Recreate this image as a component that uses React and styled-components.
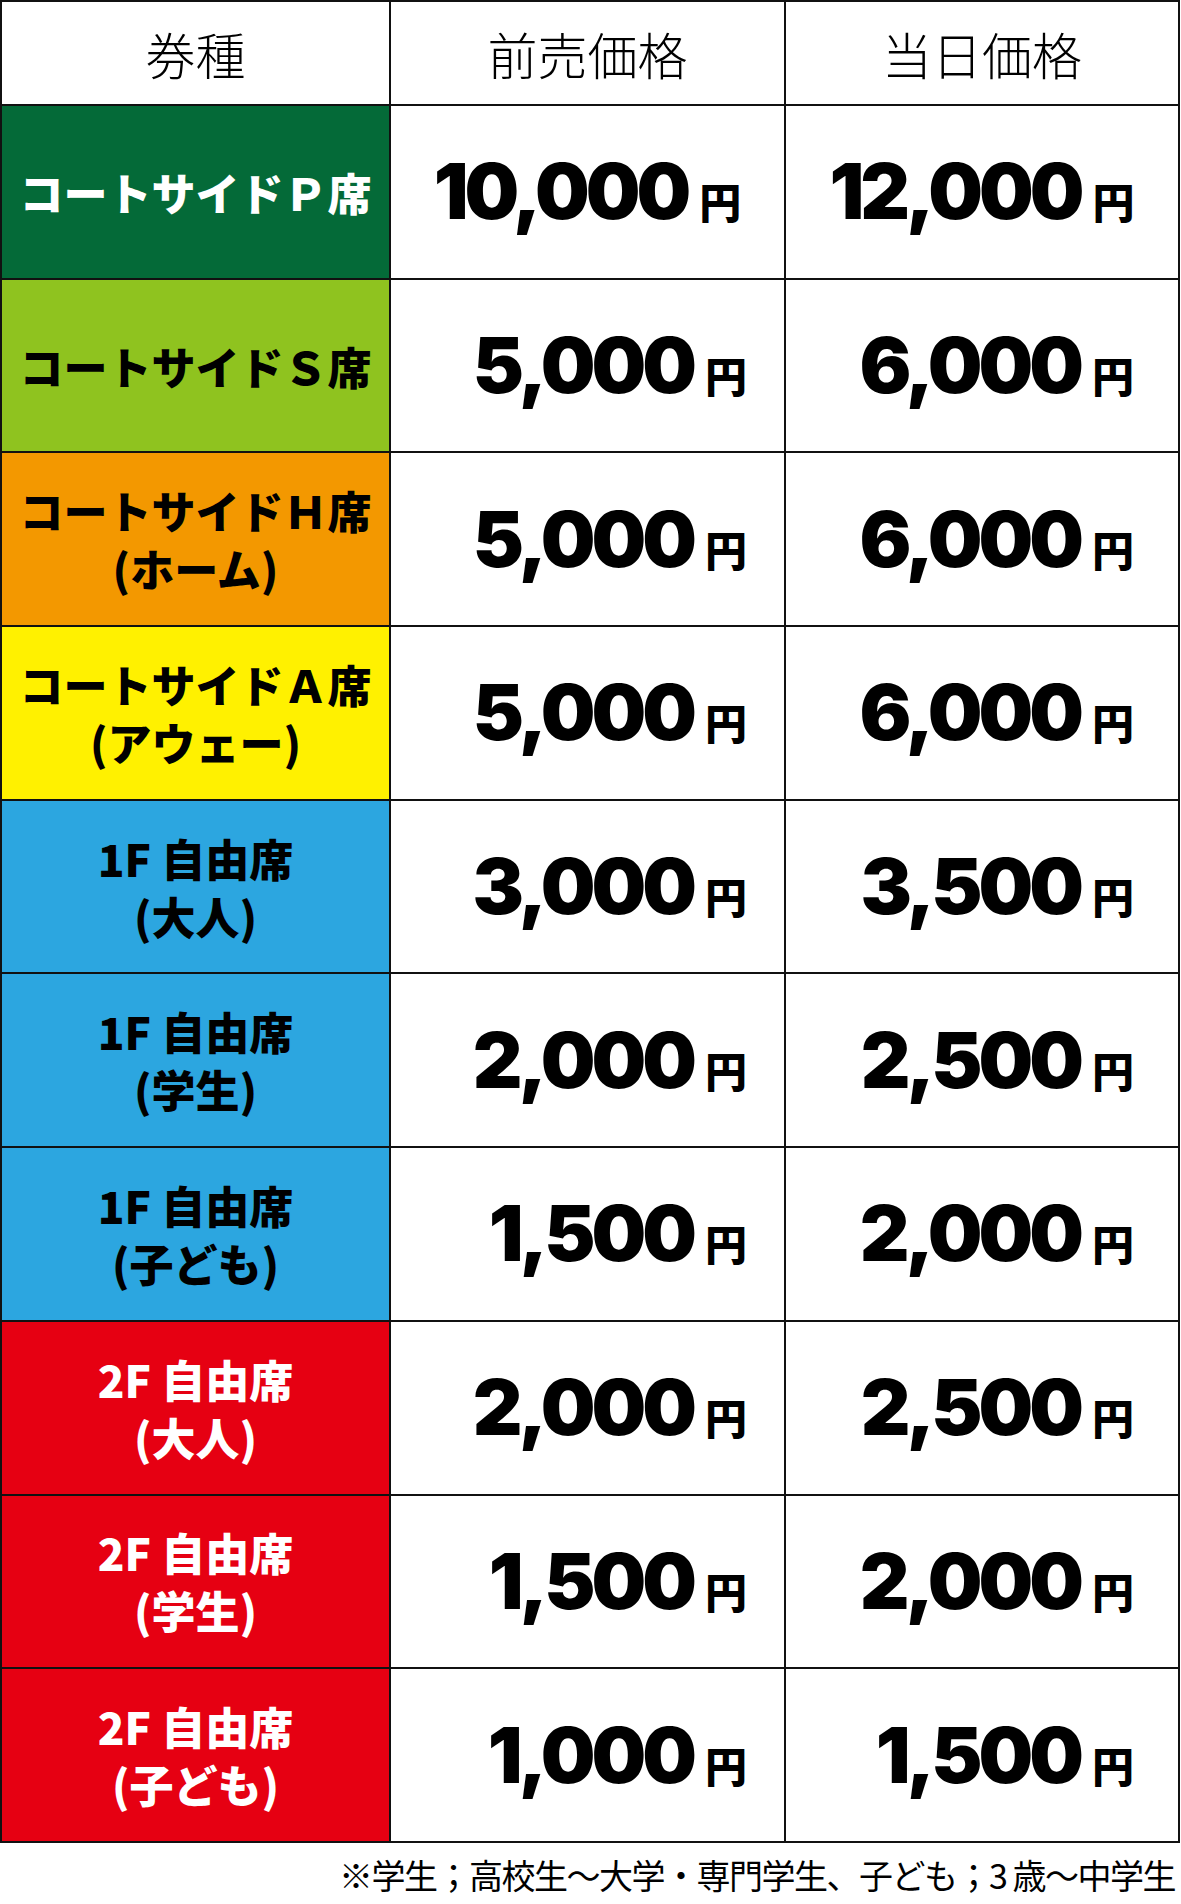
import React from 'react'
import styled, { createGlobalStyle } from 'styled-components'

const GlobalStyle = createGlobalStyle`
  body {
    margin: 0;
    background: #fff;
    font-family: "Noto Sans CJK JP", "Noto Sans", sans-serif;
    color: #000;
  }
`

const Sheet = styled.div`
  width: 1181px;
`

const Table = styled.table`
  width: 1180px;
  border-collapse: collapse;
  table-layout: fixed;
  border: 2px solid #111;
`

const HeadRow = styled.tr`
  height: 104px;
`

const Row = styled.tr`
  height: 173.7px;
`

const HeadCell = styled.th`
  border: 2px solid #111;
  padding: 0;
  font-family: "Noto Sans CJK JP", sans-serif;
  font-weight: 300;
  font-size: 50px;
  line-height: 1;
  text-align: center;
  vertical-align: middle;
`

const LabelCell = styled.td`
  border: 2px solid #111;
  padding: 0;
  background: ${p => p.$bg};
  color: ${p => p.$fg};
  font-family: "Noto Sans CJK JP", sans-serif;
  font-weight: 900;
  font-size: 44px;
  line-height: 58px;
  text-align: center;
  vertical-align: middle;
  white-space: nowrap;
`

const Line = styled.div`
  display: block;
`

const PriceCell = styled.td`
  border: 2px solid #111;
  padding: 0 ${p => (p.$center ? 0 : p.$pr)}px 0 0;
  text-align: ${p => (p.$center ? 'center' : 'right')};
  vertical-align: middle;
  white-space: nowrap;
`

const Amount = styled.span`
  font-family: Inter, "Liberation Sans", sans-serif;
  font-weight: 900;
  font-size: 77px;
  letter-spacing: -4px;
  line-height: 1;
`

const Yen = styled.span`
  font-family: "Noto Sans CJK JP", sans-serif;
  font-weight: 900;
  font-size: 42px;
  margin-left: 12px;
  line-height: 1;
`

const Note = styled.div`
  margin-top: 12px;
  padding-right: 6px;
  text-align: right;
  font-family: "Noto Sans CJK JP", sans-serif;
  font-weight: 400;
  font-size: 34px;
  letter-spacing: -1.5px;
  line-height: 40px;
  white-space: pre;
`

const GREEN = '#046a38'
const LIME = '#8fc31f'
const ORANGE = '#f39800'
const YELLOW = '#fff100'
const BLUE = '#2ca6e0'
const RED = '#e60012'

const rows = [
  { label: ['コートサイドＰ席'], bg: GREEN, fg: '#fff', pre: '10,000', day: '12,000', center: true },
  { label: ['コートサイドＳ席'], bg: LIME, fg: '#000', pre: '5,000', day: '6,000' },
  { label: ['コートサイドＨ席', '(ホーム)'], bg: ORANGE, fg: '#000', pre: '5,000', day: '6,000' },
  { label: ['コートサイドＡ席', '(アウェー)'], bg: YELLOW, fg: '#000', pre: '5,000', day: '6,000' },
  { label: ['1F 自由席', '(大人)'], bg: BLUE, fg: '#000', pre: '3,000', day: '3,500' },
  { label: ['1F 自由席', '(学生)'], bg: BLUE, fg: '#000', pre: '2,000', day: '2,500' },
  { label: ['1F 自由席', '(子ども)'], bg: BLUE, fg: '#000', pre: '1,500', day: '2,000' },
  { label: ['2F 自由席', '(大人)'], bg: RED, fg: '#fff', pre: '2,000', day: '2,500' },
  { label: ['2F 自由席', '(学生)'], bg: RED, fg: '#fff', pre: '1,500', day: '2,000' },
  { label: ['2F 自由席', '(子ども)'], bg: RED, fg: '#fff', pre: '1,000', day: '1,500' },
]

const Price = ({ value, center, pr }) => (
  <PriceCell $center={center} $pr={pr}>
    <Amount>{value}</Amount>
    <Yen>円</Yen>
  </PriceCell>
)

export default function App() {
  return (
    <Sheet>
      <GlobalStyle />
      <Table>
        <colgroup>
          <col style={{ width: 389 }} />
          <col style={{ width: 395 }} />
          <col style={{ width: 394 }} />
        </colgroup>
        <thead>
          <HeadRow>
            <HeadCell>券種</HeadCell>
            <HeadCell>前売価格</HeadCell>
            <HeadCell>当日価格</HeadCell>
          </HeadRow>
        </thead>
        <tbody>
          {rows.map((r, i) => (
            <Row key={i}>
              <LabelCell $bg={r.bg} $fg={r.fg}>
                {r.label.map((l, j) => (
                  <Line key={j}>{l}</Line>
                ))}
              </LabelCell>
              <Price value={r.pre} center={r.center} pr={37} />
              <Price value={r.day} center={r.center} pr={44} />
            </Row>
          ))}
        </tbody>
      </Table>
      <Note>※学生；高校生〜大学・専門学生、子ども；3 歳〜中学生</Note>
    </Sheet>
  )
}
